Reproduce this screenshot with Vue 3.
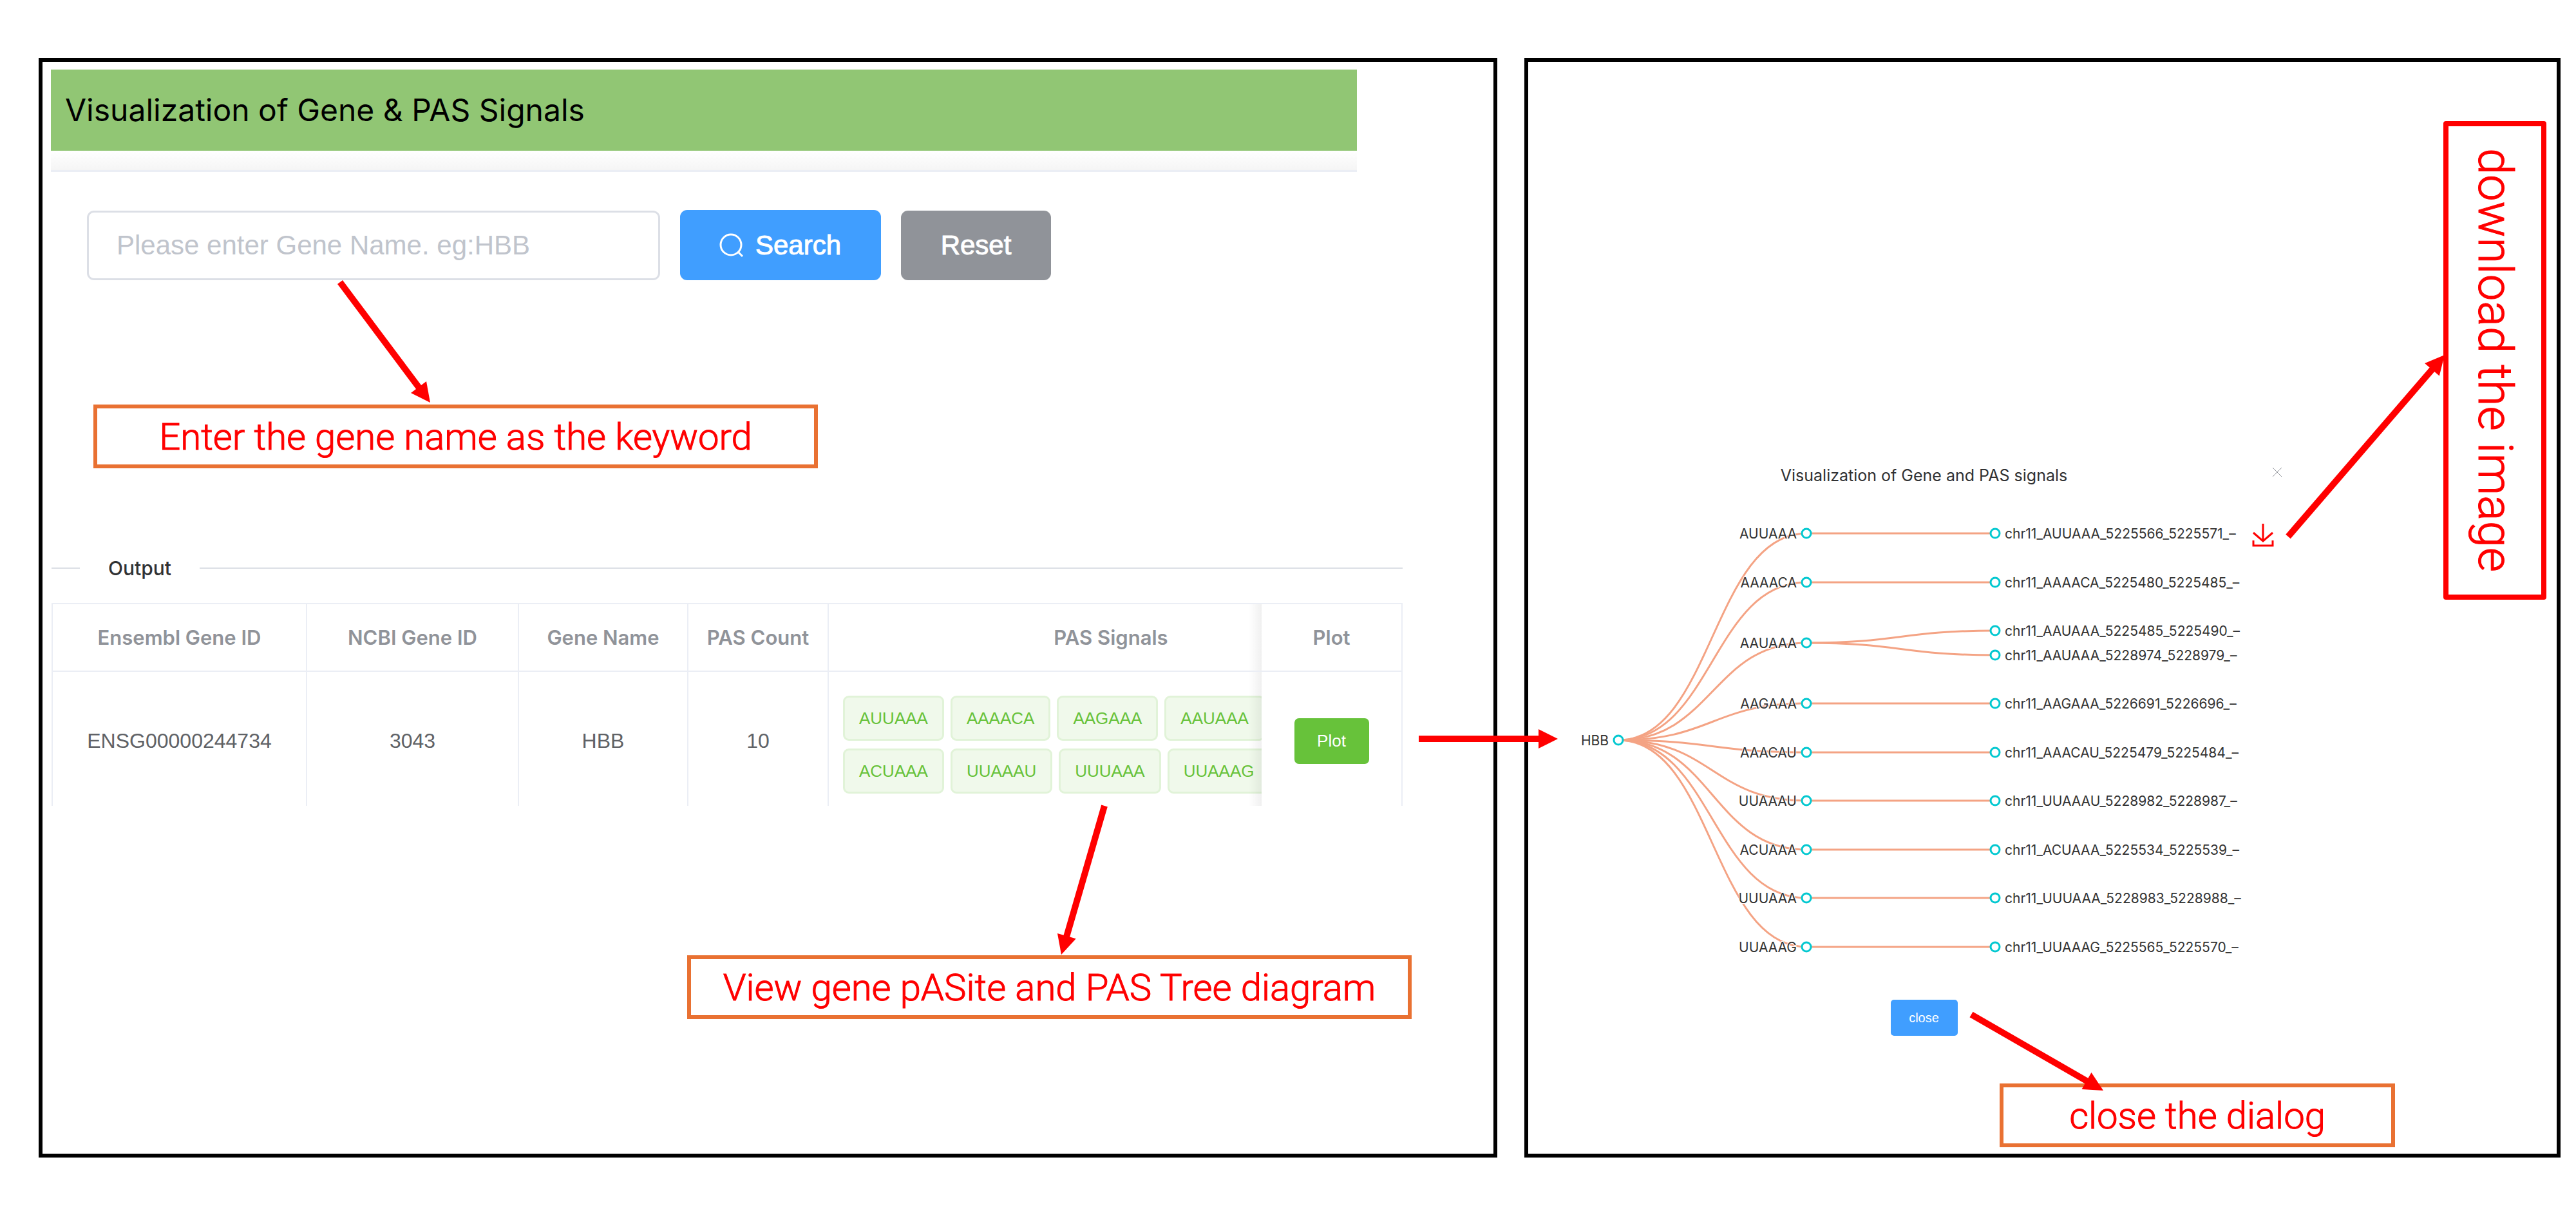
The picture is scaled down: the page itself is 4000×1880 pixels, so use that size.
<script setup>
import { ref } from 'vue'

const keyword = ref('')

const columns = ['Ensembl Gene ID', 'NCBI Gene ID', 'Gene Name', 'PAS Count', 'PAS Signals', 'Plot']
const tagRows = [
  ['AUUAAA', 'AAAACA', 'AAGAAA', 'AAUAAA'],
  ['ACUAAA', 'UUAAAU', 'UUUAAA', 'UUAAAG'],
]

// Tree canvas geometry
const rootX = 81
const midX = 373
const leafX = 666
const rowY = (slot) => Math.round(78 + slot * 37.75)
const root = { x: rootX, y: 399, name: 'HBB' }

const groups = [
  { name: 'AUUAAA', leaves: [[0, '5225566_5225571']] },
  { name: 'AAAACA', leaves: [[2, '5225480_5225485']] },
  { name: 'AAUAAA', leaves: [[4, '5225485_5225490'], [5, '5228974_5228979']] },
  { name: 'AAGAAA', leaves: [[7, '5226691_5226696']] },
  { name: 'AAACAU', leaves: [[9, '5225479_5225484']] },
  { name: 'UUAAAU', leaves: [[11, '5228982_5228987']] },
  { name: 'ACUAAA', leaves: [[13, '5225534_5225539']] },
  { name: 'UUUAAA', leaves: [[15, '5228983_5228988']] },
  { name: 'UUAAAG', leaves: [[17, '5225565_5225570']] },
]

const link = (a, b) => {
  const m = (a.x + b.x) / 2
  return `M${a.x} ${a.y}C${m} ${a.y} ${m} ${b.y} ${b.x} ${b.y}`
}

const branches = groups.map((g) => {
  const slot = g.leaves.reduce((sum, l) => sum + l[0], 0) / g.leaves.length
  return { x: midX, y: rowY(slot), name: g.name }
})
const leaves = groups.flatMap((g, i) =>
  g.leaves.map(([slot, range]) => ({
    x: leafX,
    y: rowY(slot),
    name: `chr11_${g.name}_${range}_–`,
    parent: branches[i],
  })),
)
const links = [...branches.map((b) => link(root, b)), ...leaves.map((l) => link(l.parent, l))]

// Annotation arrows: start point and tip
const arrows = [
  [528, 438, 668, 625],
  [1715, 1251, 1648, 1482],
  [2203, 1147, 2419, 1147],
  [3553, 833, 3796, 551],
  [3061, 1575, 3266, 1693],
].map(([x1, y1, x2, y2]) => {
  const len = Math.hypot(x2 - x1, y2 - y1)
  const ux = (x2 - x1) / len
  const uy = (y2 - y1) / len
  const bx = x2 - ux * 30
  const by = y2 - uy * 30
  return {
    x1,
    y1,
    x2: bx + ux,
    y2: by + uy,
    head: `${x2},${y2} ${bx - uy * 15},${by + ux * 15} ${bx + uy * 15},${by - ux * 15}`,
  }
})
</script>

<template>
  <main class="page">
    <section class="panel search-panel">
      <header class="title-bar"><h1>Visualization of Gene &amp; PAS Signals</h1></header>
      <div class="card">
        <form class="search-form" @submit.prevent>
          <input
            v-model="keyword"
            class="gene-input"
            type="text"
            aria-label="Gene Name"
            placeholder="Please enter Gene Name. eg:HBB"
          />
          <button class="btn btn-search" type="submit">
            <svg class="search-icon" viewBox="0 0 36 36" aria-hidden="true">
              <circle cx="17" cy="17" r="16" />
              <path d="M28 28L35 35" />
            </svg>
            <span>Search</span>
          </button>
          <button class="btn btn-reset" type="reset">Reset</button>
        </form>
      </div>

      <p class="note note-keyword">Enter the gene name as the keyword</p>

      <h2 class="divider"><span>Output</span></h2>

      <table class="result">
        <colgroup>
          <col class="c-ensembl" />
          <col class="c-ncbi" />
          <col class="c-name" />
          <col class="c-count" />
          <col class="c-signals" />
          <col class="c-plot" />
        </colgroup>
        <thead>
          <tr>
            <th v-for="c in columns" :key="c" scope="col" :class="{ fixed: c === 'Plot' }">
              <div v-if="c === 'PAS Signals'" class="clip"><div class="wide">{{ c }}</div></div>
              <template v-else>{{ c }}</template>
            </th>
          </tr>
        </thead>
        <tbody>
          <tr>
            <td>ENSG00000244734</td>
            <td>3043</td>
            <td>HBB</td>
            <td>10</td>
            <td class="signals">
              <div class="clip">
                <div class="tags">
                  <div v-for="(row, i) in tagRows" :key="i" class="tag-row">
                    <span v-for="t in row" :key="t" class="tag">{{ t }}</span>
                  </div>
                </div>
              </div>
            </td>
            <td class="fixed"><button class="btn-plot" type="button">Plot</button></td>
          </tr>
        </tbody>
      </table>

      <p class="note note-tree">View gene pASite and PAS Tree diagram</p>
    </section>

    <section class="panel tree-panel">
      <div class="tree-column">
        <div class="dialog" role="dialog" aria-labelledby="dialog-title">
          <header class="dialog-head">
            <h2 id="dialog-title">Visualization of Gene and PAS signals</h2>
            <button class="dialog-x" type="button" aria-label="Close">
              <svg viewBox="0 0 14 14" aria-hidden="true"><path d="M0 0L14 14M14 0L0 14" /></svg>
            </button>
          </header>
          <div class="dialog-body">
            <svg class="tree" width="1060" height="802">
              <path v-for="(d, i) in links" :key="i" class="link" :d="d" />
              <g v-for="n in [root, ...branches]" :key="n.name">
                <circle :cx="n.x" :cy="n.y" r="7" />
                <text class="before" :x="n.x - 15" :y="n.y + 8">{{ n.name }}</text>
              </g>
              <g v-for="n in leaves" :key="n.name">
                <circle :cx="n.x" :cy="n.y" r="7" />
                <text :x="n.x + 15" :y="n.y + 8">{{ n.name }}</text>
              </g>
            </svg>
            <button class="download" type="button" aria-label="Download">
              <svg viewBox="0 0 34 36" aria-hidden="true">
                <path d="M17 0V27M2 14L17 27L32 14M2 26V34H32V26" />
              </svg>
            </button>
          </div>
          <button class="btn-close" type="button">close</button>
        </div>
        <p class="note note-close">close the dialog</p>
      </div>
      <p class="note-download">download the image</p>
    </section>

    <svg class="arrows" aria-hidden="true">
      <g v-for="(a, i) in arrows" :key="i">
        <line :x1="a.x1" :y1="a.y1" :x2="a.x2" :y2="a.y2" />
        <polygon :points="a.head" />
      </g>
    </svg>
  </main>
</template>

<style>
body {
  background: #fff;
}
</style>

<style scoped>
* {
  box-sizing: border-box;
}
h1,
h2,
p {
  margin: 0;
  font-weight: 400;
}
button {
  font-family: inherit;
  border: 0;
  padding: 0;
  cursor: pointer;
}
.page {
  position: relative;
  display: grid;
  grid-template-columns: 2265fr 1609fr;
  gap: 42px;
  padding: 90px 24px 84px 60px;
  font-family: 'Liberation Sans', Arial, sans-serif;
}
.panel {
  border: 6px solid #000;
  min-width: 0;
}
.search-panel {
  padding: 12px 0 209px 13px;
}

.title-bar {
  display: flex;
  align-items: center;
  height: 126px;
  margin-right: 212px;
  padding-left: 22px;
  background: #91c674;
}
.title-bar h1 {
  font: 400 48px/60px Inter, 'Liberation Sans', sans-serif;
  color: #000;
}
.card {
  margin-right: 212px;
  padding-top: 30px;
  background: linear-gradient(#fff, #f5f5f5) top / 100% 30px no-repeat;
}
.search-form {
  display: flex;
  align-items: center;
  padding: 59px 0 0 56px;
  border-top: 3px solid #ebeef5;
}
.gene-input {
  flex: 0 1 890px;
  min-width: 0;
  height: 108px;
  padding: 0 43px;
  border: 3px solid #dcdfe6;
  border-radius: 11px;
  background: #fff;
  font: 400 42px/48px 'Liberation Sans', Arial, sans-serif;
  color: #606266;
}
.gene-input::placeholder {
  color: #c0c4cc;
  opacity: 1;
}
.btn {
  display: flex;
  align-items: center;
  justify-content: center;
  border-radius: 11px;
  color: #fff;
  font-size: 42px;
  -webkit-text-stroke: 1px #fff;
}
.btn-search {
  gap: 19px;
  width: 312px;
  height: 109px;
  margin-left: 31px;
  background: #409eff;
}
.btn-reset {
  width: 233px;
  height: 108px;
  margin-left: 31px;
  background: #909399;
}
.search-icon {
  width: 36px;
  height: 36px;
  overflow: visible;
  fill: none;
  stroke: #fff;
  stroke-width: 3;
}

.note {
  display: flex;
  align-items: center;
  justify-content: center;
  height: 99px;
  border: 6px solid #e97132;
  background: #fff;
  color: #f00;
  font: 300 58px/64px Roboto, 'Noto Sans', sans-serif;
  -webkit-text-stroke: 1px #f00;
  white-space: nowrap;
}
.note-keyword {
  width: 1125px;
  margin: 193px 0 135px 66px;
}
.note-tree {
  width: 1125px;
  margin: 232px 0 0 988px;
}
.note-close {
  width: 614px;
  margin: 74px 0 9px 732px;
}

.divider {
  display: flex;
  align-items: center;
  gap: 44px;
  height: 40px;
  margin-right: 141px;
  padding-left: 1px;
  font: 500 30px/40px Inter, 'Liberation Sans', sans-serif;
  color: #303133;
}
.divider::before,
.divider::after {
  content: '';
  height: 2px;
  background: #dcdfe6;
}
.divider::before {
  width: 44px;
}
.divider::after {
  flex: 1;
}

.result {
  table-layout: fixed;
  width: calc(100% - 142px);
  margin: 34px 0 0 1px;
  border-collapse: separate;
  border-spacing: 0;
  border-left: 2px solid #ebeef5;
  color: #606266;
  font-size: 32px;
  text-align: center;
}
.c-ensembl {
  width: 395px;
}
.c-ncbi {
  width: 329px;
}
.c-name {
  width: 263px;
}
.c-count {
  width: 218px;
}
.c-plot {
  width: 219px;
}
th,
td {
  padding: 0;
  border-right: 2px solid #ebeef5;
}
th {
  height: 107px;
  border-top: 2px solid #ebeef5;
  border-bottom: 2px solid #ebeef5;
  color: #909399;
  font: 600 31px/40px Inter, 'Liberation Sans', sans-serif;
}
td {
  height: 208px;
  padding-top: 7px;
}
th:nth-child(5),
td:nth-child(5) {
  border-right: 0;
}
.clip {
  overflow: hidden;
}
.wide {
  width: 876px;
}
.signals {
  padding-top: 37px;
  vertical-align: top;
}
.tags {
  display: flex;
  flex-direction: column;
  gap: 12px;
  padding-left: 22px;
}
.tag-row {
  display: flex;
  gap: 10px;
}
.tag {
  flex: none;
  height: 70px;
  padding: 0 22px;
  border: 3px solid #e1f3d8;
  border-radius: 9px;
  background: #f0f9eb;
  color: #67c23a;
  font-size: 26px;
  line-height: 64px;
}
.fixed {
  position: relative;
  background: #fff;
}
.fixed::before {
  content: '';
  position: absolute;
  top: 0;
  bottom: 0;
  left: -20px;
  width: 20px;
  background: linear-gradient(to left, rgba(0, 0, 0, 0.06), transparent);
}
.btn-plot {
  width: 116px;
  height: 71px;
  border-radius: 7px;
  background: #67c23a;
  color: #fff;
  font-size: 26px;
  vertical-align: middle;
}

.tree-panel {
  display: flex;
  align-items: flex-start;
}
.tree-column {
  flex: 1;
  min-width: 0;
  padding-top: 630px;
}
.dialog {
  display: flex;
  flex-direction: column;
  align-items: center;
  width: 1111px;
  margin-left: 59px;
}
.dialog-head {
  display: grid;
  grid-template-columns: 14px 1fr 14px;
  width: 100%;
  height: 24px;
  color: #303133;
  text-align: center;
}
.dialog-head h2 {
  grid-column: 2;
  font: 400 25px/24px Inter, 'Liberation Sans', sans-serif;
}
.dialog-x {
  width: 14px;
  height: 14px;
  background: none;
}
.dialog-x svg {
  display: block;
  fill: none;
  stroke: #909399;
  stroke-width: 1;
}
.dialog-body {
  display: flex;
  align-items: flex-start;
  width: 100%;
}
.tree {
  flex: none;
  font: 400 21px Inter, 'Liberation Sans', sans-serif;
}
.tree .link {
  fill: none;
  stroke: #f4a384;
  stroke-width: 3;
}
.tree circle {
  fill: #fff;
  stroke: #03c8d0;
  stroke-width: 3;
}
.tree text {
  fill: #333;
  stroke: #fff;
  stroke-width: 2;
  paint-order: stroke;
}
.tree .before {
  text-anchor: end;
}
.download {
  width: 34px;
  height: 36px;
  margin: 63px 0 0 5px;
  background: none;
}
.download svg {
  display: block;
  fill: none;
  stroke: #f00;
  stroke-width: 3;
}
.btn-close {
  width: 104px;
  height: 56px;
  border-radius: 5px;
  background: #409eff;
  color: #fff;
  font-size: 20px;
}
.note-download {
  display: flex;
  align-items: center;
  justify-content: center;
  width: 160px;
  height: 743px;
  margin: 92px 16px 0 0;
  border: 8px solid #f00;
  border-radius: 4px;
  color: #f00;
  font: 300 74px/84px Roboto, 'Noto Sans', sans-serif;
  -webkit-text-stroke: 1px #f00;
  writing-mode: vertical-rl;
  white-space: nowrap;
}

.arrows {
  position: absolute;
  inset: 0;
  width: 100%;
  height: 100%;
  pointer-events: none;
}
.arrows line {
  stroke: #f00;
  stroke-width: 10;
}
.arrows polygon {
  fill: #f00;
}
</style>
